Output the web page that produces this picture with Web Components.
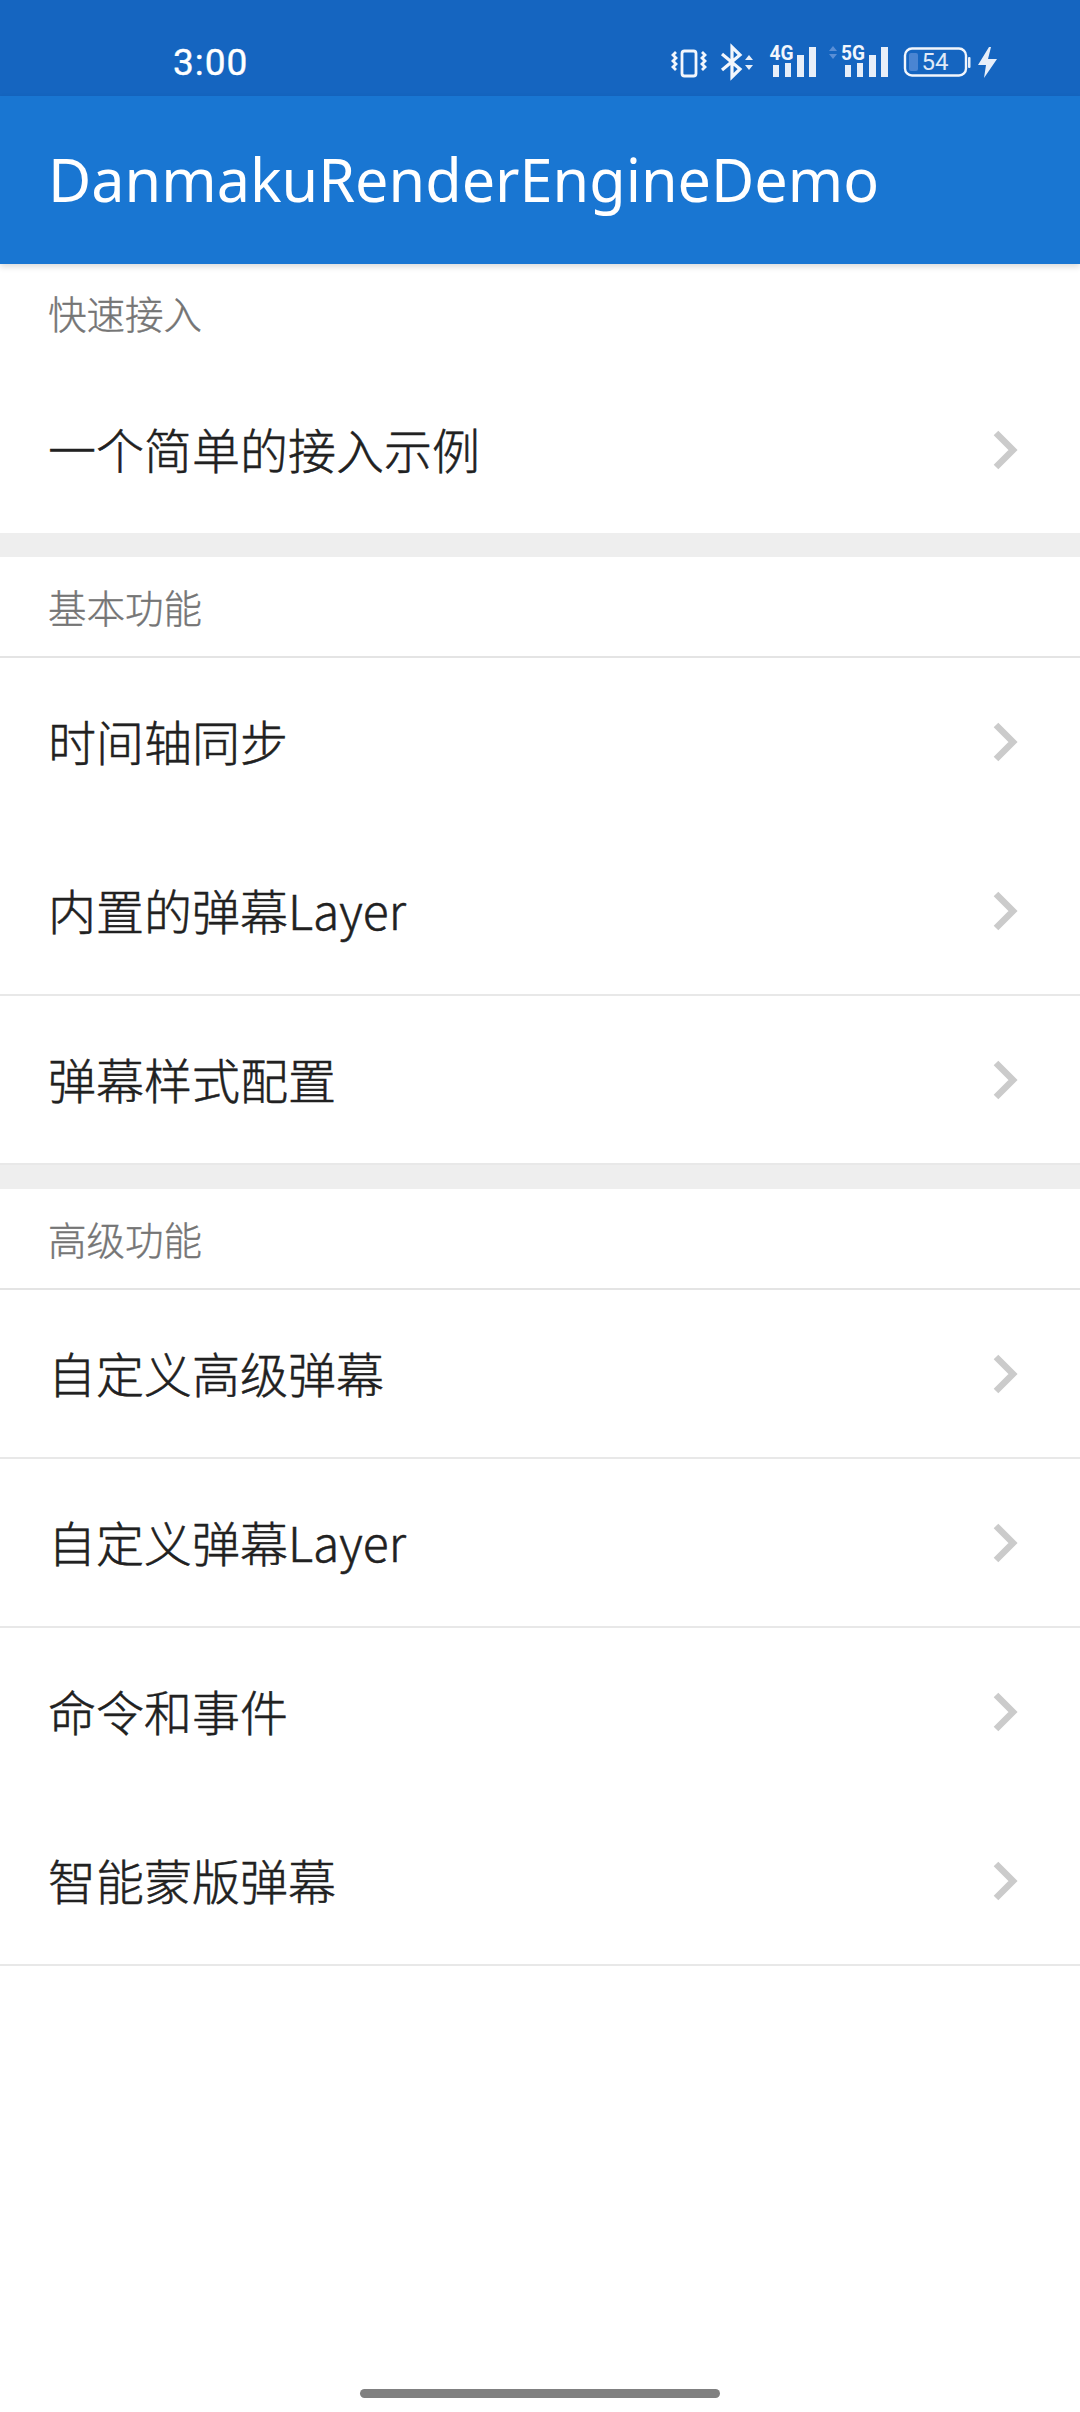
<!DOCTYPE html>
<html lang="zh"><head><meta charset="utf-8"><title>DanmakuRenderEngineDemo</title>
<style>
html,body{margin:0;padding:0;background:#fff}
body{width:1080px;height:2412px;overflow:hidden;font-family:"Noto Sans CJK SC","Noto Sans",sans-serif;display:flex;flex-direction:column}
</style></head><body>
<demo-status-bar></demo-status-bar>
<demo-app-bar>DanmakuRenderEngineDemo</demo-app-bar>
<demo-list>
  <demo-head h="104" flush>快速接入</demo-head>
  <demo-item h="165" noline>一个简单的接入示例</demo-item>
  <demo-gap></demo-gap>
  <demo-head>基本功能</demo-head>
  <demo-item noline>时间轴同步</demo-item>
  <demo-item>内置的弹幕Layer</demo-item>
  <demo-item>弹幕样式配置</demo-item>
  <demo-gap></demo-gap>
  <demo-head>高级功能</demo-head>
  <demo-item>自定义高级弹幕</demo-item>
  <demo-item>自定义弹幕Layer</demo-item>
  <demo-item noline>命令和事件</demo-item>
  <demo-item>智能蒙版弹幕</demo-item>
</demo-list>
<demo-home-bar></demo-home-bar>
<script>
const def=(name,html,init)=>customElements.define(name,class extends HTMLElement{
  connectedCallback(){ if(this.shadowRoot) return; this.attachShadow({mode:'open'}).innerHTML=html; if(init) init(this); }
});
def('demo-status-bar',`<style>
:host{display:flex;align-items:center;height:96px;background:#1565c0;color:#fff;padding:0 0 0 173px;box-sizing:border-box;flex:none}
.t{font:400 37px/1 Roboto,sans-serif;letter-spacing:1px;-webkit-text-stroke:.4px #fff;margin-top:28px;width:500px}
svg{position:absolute;left:670px;top:40px}
</style><span class="t">3:00</span>
<svg width="340" height="44" viewBox="670 40 340 44" fill="#e8eff9" stroke="none">
<g fill="none" stroke="#f2f6fc" stroke-width="2.8"><rect x="682" y="51" width="14" height="25" rx="2.5"/>
<path d="M676 52l-3 3 3 3-3 3 3 3-3 3 3 3M702 52l3 3-3 3 3 3-3 3 3 3-3 3"/>
<path d="M722 54l18 15-8 8V47l8 8-18 15" stroke-width="3.200"/></g>
<path d="M745 60l4-5 4 5zM745 65l4 5 4-5z"/>
<text x="769.500" y="60" font-family="Roboto,sans-serif" font-weight="700" font-size="20" fill="#f2f6fc" textLength="24" lengthAdjust="spacingAndGlyphs">4G</text>
<rect x="773" y="65" width="6" height="12"/><rect x="785" y="63" width="6" height="14"/><rect x="797" y="55" width="7" height="22"/><rect x="809" y="47" width="7" height="30"/>
<path d="M829 51l4-5 4 5zM829 54l4 5 4-5z" fill="#5a8fd6"/>
<text x="841" y="60" font-family="Roboto,sans-serif" font-weight="700" font-size="20" fill="#f2f6fc" textLength="24" lengthAdjust="spacingAndGlyphs">5G</text>
<rect x="845" y="65" width="6" height="12"/><rect x="857" y="63" width="6" height="14"/><rect x="869" y="55" width="7" height="22"/><rect x="881" y="47" width="7" height="30"/>
<rect x="905" y="48.500" width="61" height="27" rx="7" fill="none" stroke="#f2f6fc" stroke-width="2.400"/>
<rect x="909" y="53" width="9" height="18" rx="2" fill="#4a85d2"/>
<rect x="968" y="57" width="2.500" height="11" rx="1"/>
<text x="935" y="70" text-anchor="middle" font-family="Roboto,sans-serif" font-size="24" fill="#dfe9f7">54</text>
<path d="M989 47l-11 18h8l-2 13 13-19h-9l3-12z"/>
</svg>`);
def('demo-app-bar',`<style>
:host{display:flex;align-items:center;height:168px;background:#1976d2;color:#fff;padding:0 48px;box-sizing:border-box;flex:none;font:400 59.300px/1 "Noto Sans",sans-serif;box-shadow:0 3px 6px rgba(0,0,0,.14);position:relative;z-index:1}
</style><slot></slot>`);
def('demo-list',`<style>:host{display:flex;flex-direction:column;flex:none}</style><slot></slot>`);
def('demo-head',`<style>
:host{display:flex;align-items:center;height:101px;padding:0 48px;box-sizing:border-box;color:#757575;font-size:38.500px;font-weight:300;-webkit-text-stroke:.4px #757575;line-height:1;border-bottom:2px solid #e4e4e4;flex:none}
:host([flush]){height:104px;border:0;align-items:flex-start;padding-top:30px}
span{display:block;margin-top:-1px}
</style><span><slot></slot></span>`);
def('demo-item',`<style>
:host{display:flex;align-items:center;justify-content:space-between;height:169px;padding:0 48px;box-sizing:border-box;color:#212121;font-size:48px;font-weight:300;-webkit-text-stroke:.5px #212121;line-height:1;border-bottom:2px solid #e8e8e8;flex:none}
:host([noline]){border-bottom-color:transparent}
span{display:block;margin-top:-3px}
svg{margin-right:11px;flex:none}
</style><span><slot></slot></span><svg width="30" height="42" viewBox="0 0 30 42"><path d="M5 4l17 17L5 38" fill="none" stroke="#cbcbcb" stroke-width="6.500"/></svg>`,
el=>{ if(el.getAttribute('h')) el.style.height=el.getAttribute('h')+'px'; });
def('demo-gap',`<style>:host{display:block;height:24px;background:#eeeeee;flex:none}</style>`);
def('demo-home-bar',`<style>
:host{display:flex;justify-content:center;align-items:flex-end;flex:1;padding-bottom:14px;box-sizing:border-box}
i{display:block;width:360px;height:9px;border-radius:5px;background:#808080}
</style><i></i>`);
</script>
</body></html>
